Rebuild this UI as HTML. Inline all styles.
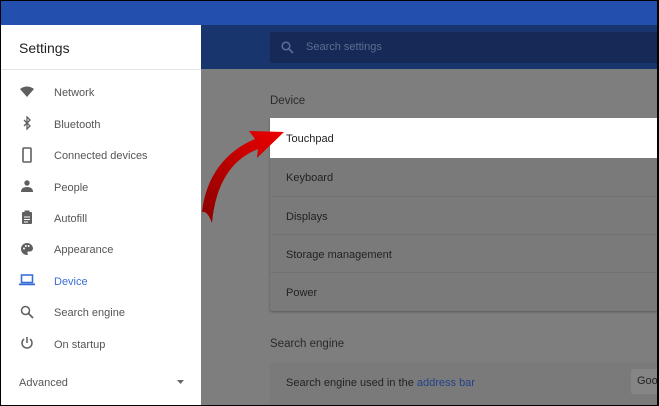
<!DOCTYPE html>
<html><head><style>
*{margin:0;padding:0;box-sizing:border-box}
body{width:659px;height:406px;overflow:hidden;background:#000;font-family:"Liberation Sans",sans-serif;position:relative}
#wrap{position:absolute;left:1px;top:1px;width:656px;height:404px;background:#7e7e7e;overflow:hidden}
.top{position:absolute;left:0;top:0;width:656px;height:24px;background:#2350ae}
.band{position:absolute;left:0;top:24px;width:656px;height:44px;background:#19356e}
.search{position:absolute;left:269px;top:31px;width:400px;height:31px;background:#162a57;border-radius:2px}
.search span{position:absolute;left:36px;top:9px;font-size:11px;color:#5b6d92}
.side{position:absolute;left:0;top:24px;width:200px;height:390px;background:#fff}
.side .t{position:absolute;left:18px;top:15px;font-size:14px;color:#222}
.side .hr{position:absolute;left:0;top:44px;width:200px;height:1px;background:#e4e4e4}
.it{position:absolute;left:53px;font-size:11px;color:#555;margin-top:1px}
.ic{position:absolute;left:19px}
.h{position:absolute;left:269px;font-size:11.5px;color:#2a2a2a;margin-top:1px}
.card{position:absolute;left:269px;width:400px;background:#7a7a7a;border-radius:2px}
.row{position:absolute;left:0;width:400px;border-top:1px solid #727272;font-size:11px;color:#222;padding-left:16px;padding-top:1px}
</style></head><body><div id="wrap">
<div class="top"></div><div class="band"></div>
<div class="search"><svg style="position:absolute;left:11px;top:9px" width="13" height="13" viewBox="0 0 13 13"><circle cx="5" cy="5" r="3.8" fill="none" stroke="#5b6d92" stroke-width="1.5"/><line x1="8" y1="8" x2="12" y2="12" stroke="#5b6d92" stroke-width="1.6"/></svg><span>Search settings</span></div>
<div class="h" style="top:93px">Device</div>
<div class="card" style="top:117px;height:193px;box-shadow:0 1px 2px rgba(0,0,0,.3)">
<div class="row" style="top:0;height:40px;background:#fff;border:none;line-height:40px">Touchpad</div>
<div class="row" style="top:40px;height:38px;line-height:38px;border:none">Keyboard</div>
<div class="row" style="top:78px;height:38px;line-height:38px">Displays</div>
<div class="row" style="top:116px;height:38px;line-height:38px">Storage management</div>
<div class="row" style="top:154px;height:38px;line-height:38px">Power</div>
</div>
<div class="h" style="top:336px">Search engine</div>
<div class="card" style="top:362px;height:50px">
<div class="row" style="top:0;height:38px;line-height:38px;border:none">Search engine used in the <span style="color:#23418a">address bar</span></div>
<div style="position:absolute;left:361px;top:6px;width:40px;height:25px;background:#858585;border-radius:2px;font-size:11px;line-height:25px;padding-left:6px;color:#222">Goo</div>
</div>
<div class="side">
<div class="t">Settings</div><div class="hr"></div>
<svg class="ic" style="top:61px" width="14" height="12" viewBox="0 0 14 12"><path d="M0 3 Q7 -2 14 3 L7 11Z" fill="#5f5f5f"/></svg>
<div class="it" style="top:61px">Network</div>
<svg class="ic" style="top:91px" width="14" height="14" viewBox="0 0 14 14"><path d="M4 4 L10 10 L7 13 L7 1 L10 4 L4 10" fill="none" stroke="#5f5f5f" stroke-width="1.3"/></svg>
<div class="it" style="top:93px">Bluetooth</div>
<svg class="ic" style="top:122px" width="14" height="16" viewBox="0 0 14 16"><rect x="3" y="1" width="8" height="14" rx="1" fill="none" stroke="#5f5f5f" stroke-width="1.6"/></svg>
<div class="it" style="top:124px">Connected devices</div>
<svg class="ic" style="top:155px" width="14" height="12" viewBox="0 0 14 12"><circle cx="7" cy="3" r="2.7" fill="#5f5f5f"/><path d="M1 12 Q1 7 7 7 Q13 7 13 12Z" fill="#5f5f5f"/></svg>
<div class="it" style="top:156px">People</div>
<svg class="ic" style="top:185px" width="14" height="15" viewBox="0 0 14 15"><rect x="2" y="2" width="10" height="12" rx="1" fill="#5f5f5f"/><rect x="4.5" y="0.5" width="5" height="3" fill="#5f5f5f"/><path d="M4 7h6M4 9.5h6M4 12h4" stroke="#fff" stroke-width="1"/></svg>
<div class="it" style="top:187px">Autofill</div>
<svg class="ic" style="top:217px" width="14" height="14" viewBox="0 0 14 14"><path d="M7 1A6 6 0 0 0 7 13c1 0 1-1 .6-1.6C7 10.5 7.5 9.5 8.6 9.5H10A3 3 0 0 0 13 6.5C13 3.5 10.3 1 7 1Z" fill="#5f5f5f"/><circle cx="4" cy="6.5" r="1" fill="#fff"/><circle cx="5.8" cy="4" r="1" fill="#fff"/><circle cx="8.6" cy="4" r="1" fill="#fff"/></svg>
<div class="it" style="top:218px">Appearance</div>
<svg class="ic" style="top:249px;left:18px" width="16" height="12" viewBox="0 0 16 12"><rect x="2.5" y="1" width="11" height="7.5" fill="none" stroke="#3b6fd8" stroke-width="1.6"/><rect x="0" y="9.5" width="16" height="1.8" fill="#3b6fd8"/></svg>
<div class="it" style="top:250px;color:#3b6fd8">Device</div>
<svg class="ic" style="top:280px" width="14" height="14" viewBox="0 0 14 14"><circle cx="5.5" cy="5.5" r="4" fill="none" stroke="#5f5f5f" stroke-width="1.5"/><line x1="8.5" y1="8.5" x2="13" y2="13" stroke="#5f5f5f" stroke-width="1.7"/></svg>
<div class="it" style="top:281px">Search engine</div>
<svg class="ic" style="top:311px" width="14" height="14" viewBox="0 0 14 14"><path d="M7 1V7" stroke="#5f5f5f" stroke-width="1.5"/><path d="M4 3A5 5 0 1 0 10 3" fill="none" stroke="#5f5f5f" stroke-width="1.5"/></svg>
<div class="it" style="top:313px">On startup</div>
<div class="it" style="top:351px;left:18px">Advanced</div>
<svg style="position:absolute;left:176px;top:355px" width="7" height="4"><path d="M0 0H7L3.5 4Z" fill="#666"/></svg>
</div>
<svg style="position:absolute;left:0;top:0" width="656" height="404">
<defs><linearGradient id="g" x1="0" y1="1" x2="1" y2="0"><stop offset="0" stop-color="#8a0000"/><stop offset="1" stop-color="#ee0000"/></linearGradient></defs>
<path d="M201 211 C205 175 225 150 254 138 L248 130 L283 131 L256 157 L257 148 C232 158 215 180 211 222 C208 214 205 210 201 211Z" fill="url(#g)"/>
</svg>
</div></body></html>
